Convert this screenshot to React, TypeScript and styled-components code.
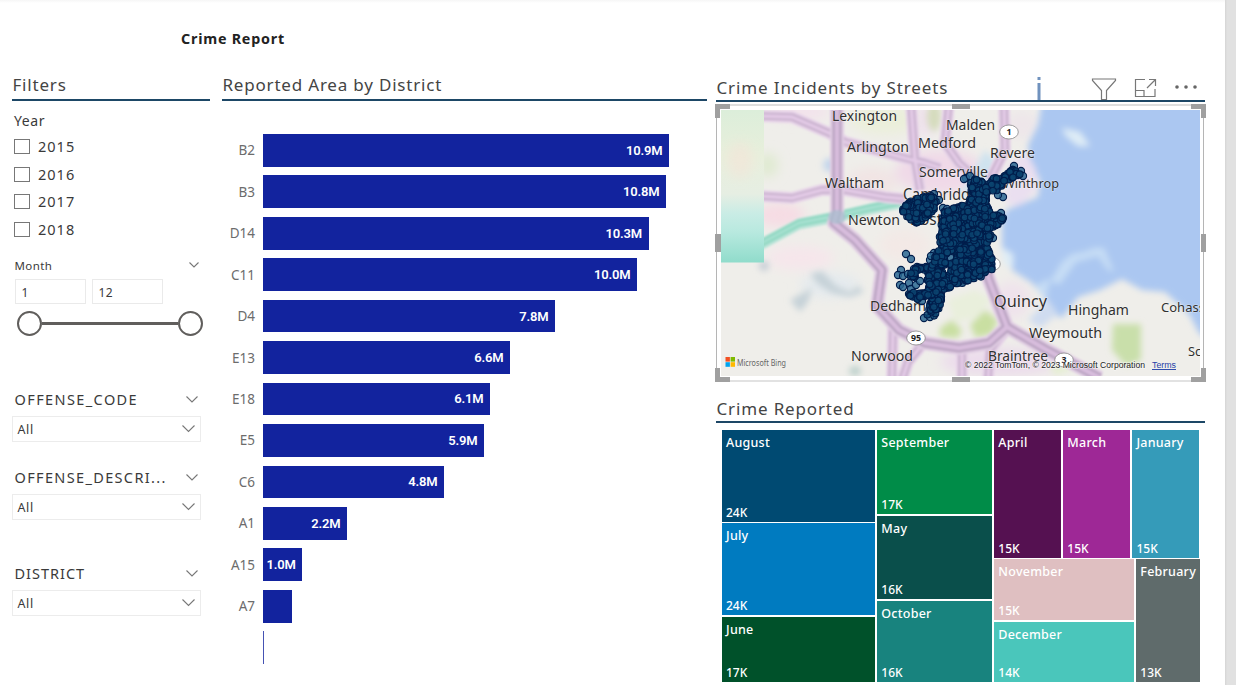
import React from 'react';
import styled, { createGlobalStyle } from 'styled-components';

const Global = createGlobalStyle`
  * { box-sizing: border-box; }
  body { margin: 0; background: #fff; overflow: hidden; font-family: "Noto Sans", "Open Sans", sans-serif; color: #3a3a3a; }
`;

const Page = styled.div`
  width: 1236px;
  height: 685px;
  display: flex;
  background: linear-gradient(#f6f6f6, #fff 3px);
`;
const Report = styled.main`
  width: 1225px;
  height: 685px;
  padding: 27px 0 0 12px;
  overflow: hidden;
`;
const Gutter = styled.div`
  width: 11px;
  background: linear-gradient(90deg, #d4d4d4, #e1e1e1 2px);
`;
const Title = styled.h1`
  margin: 0 0 0 169px;
  height: 24px;
  font-size: 14.3px;
  line-height: 24px;
  font-weight: 700;
  letter-spacing: 0.78px;
  color: #222;
`;
const Columns = styled.div`
  display: grid;
  grid-template-columns: 198px 485px 489px;
  column-gap: 12px;
  padding-top: 21px;
  & > :last-child { margin-left: -3px; width: 489px; }
`;
const Column = styled.section`
  min-width: 0;
`;
const Heading = styled.h2<{ $drop?: number; $spacing?: number }>`
  margin: 0;
  height: ${p => (p.$drop ? 30 : 29)}px;
  padding: ${p => p.$drop ?? 0}px 0 0 0.5px;
  border-bottom: 2px solid #1d4766;
  font-size: 17px;
  line-height: 26px;
  font-weight: 400;
  letter-spacing: ${p => p.$spacing ?? 0.8}px;
  color: #444;
  white-space: nowrap;
`;
const YearLabel = styled.div`
  margin: 9px 0 0 2px;
  height: 22px;
  font-size: 14px;
  line-height: 22px;
  letter-spacing: 0.6px;
`;
const CheckRow = styled.label`
  display: flex;
  align-items: center;
  gap: 8px;
  height: 27.8px;
  padding-left: 2px;
  font-size: 14.5px;
  letter-spacing: 1px;
`;
const Box = styled.span`
  width: 16px;
  height: 15px;
  margin-top: 1px;
  border: 1px solid #777;
`;
const SlicerHead = styled.div<{ $top: number; $small?: boolean; $spacing?: number }>`
  display: flex;
  align-items: center;
  justify-content: space-between;
  height: 24px;
  margin-top: ${p => p.$top}px;
  padding: 0 ${p => (p.$small ? 11.5 : 12.5)}px 0 2.5px;
  font-size: ${p => (p.$small ? 11.5 : 14.5)}px;
  letter-spacing: ${p => p.$spacing ?? 0.4}px;
  white-space: nowrap;
`;
const Inputs = styled.div`
  display: flex;
  gap: 6px;
  margin: 1.5px 0 0 2.5px;
`;
const NumberBox = styled.div`
  width: 71px;
  height: 25px;
  padding-left: 6px;
  border: 1px solid #eaeaea;
  font-size: 12px;
  line-height: 25px;
  letter-spacing: 0.5px;
`;
const Slider = styled.div`
  display: flex;
  align-items: center;
  width: 186px;
  height: 26px;
  margin: 6.5px 0 0 4.5px;
`;
const Knob = styled.span`
  width: 25px;
  height: 25px;
  border: 2px solid #605e5c;
  border-radius: 50%;
`;
const Track = styled.span`
  flex: 1;
  height: 3px;
  background: #605e5c;
`;
const Select = styled.div`
  display: flex;
  align-items: center;
  justify-content: space-between;
  width: 189px;
  height: 26px;
  margin: 5px 0 0 -0.5px;
  padding: 0 4.5px 0 5px;
  border: 1px solid #ececec;
  font-size: 12.5px;
  letter-spacing: 0.6px;
`;
const Chart = styled.div`
  display: flex;
  flex-direction: column;
  gap: 8.75px;
  padding-top: 33px;
`;
const BarRow = styled.div`
  display: flex;
  align-items: center;
  height: 32.7px;
`;
const District = styled.span`
  width: 33px;
  margin-right: 8px;
  text-align: right;
  font-size: 13.5px;
  color: #6c6c6c;
`;
const Bar = styled.div<{ $w: number }>`
  display: flex;
  align-items: center;
  justify-content: flex-end;
  width: ${p => p.$w}px;
  height: 100%;
  padding-right: 6.5px;
  background: #12239e;
  color: #fff;
  font: 600 13px Roboto, sans-serif;
  letter-spacing: -0.15px;
  white-space: nowrap;
`;
const Sliver = styled.div`
  width: 1px;
  height: 100%;
  background: #4552b3;
`;
const HeadRow = styled.div`
  position: relative;
`;
const Tools = styled.svg`
  position: absolute;
  left: 316px;
  top: 0;
`;
const Frame = styled.div`
  position: relative;
  width: 491px;
  height: 280px;
  margin: 1px 0 0 -1px;
  padding: 7px 6px 6px 6px;
`;
const FrameLines = styled.div`
  position: absolute;
  inset: 1px 2px 1px 1px;
  border: 1px solid #b5b5b5;
  border-top: 2px solid #dedede;
  border-bottom: 2px solid #e2e2e2;
`;
const Handles = styled.svg`
  position: absolute;
  left: 0;
  top: 0;
`;
const MapSvg = styled.svg`
  position: relative;
  display: block;
  width: 479px;
  height: 266px;
`;
const TreeHeading = styled(Heading)`
  margin-top: 13px;
  height: 27px;
`;
const Tree = styled.div`
  display: flex;
  gap: 2px;
  width: 477.5px;
  height: 252px;
  margin: 7px 0 0 6px;
`;
const Stack = styled.div<{ $w?: number; $row?: boolean; $h?: number }>`
  display: flex;
  flex-direction: ${p => (p.$row ? 'row' : 'column')};
  gap: ${p => (p.$row ? 2 : 1.7)}px;
  ${p => (p.$w ? `width: ${p.$w}px;` : 'flex: 1;')}
  ${p => (p.$h ? `flex: none; width: 100%; height: ${p.$h}px;` : '')}
`;
const Tile = styled.div<{ $c: string; $size: number }>`
  display: flex;
  flex-direction: column;
  justify-content: space-between;
  flex: ${p => p.$size} 1 0;
  min-width: 0;
  padding: 3px 0 0 4px;
  background: ${p => p.$c};
  color: #fff;
  font-size: 12.5px;
  line-height: 19px;
  font-weight: 500;
  letter-spacing: 0.25px;
`;
const TileValue = styled.span`
  font-size: 12px;
  line-height: 18px;
  letter-spacing: 0;
`;

const Chevron = ({ w = 12, color = '#777' }: { w?: number; color?: string }) => (
  <svg width={w} height={w / 2 + 1} viewBox={`0 0 ${w} ${w / 2 + 1}`} fill="none" stroke={color} strokeWidth="1.1">
    <path d={`M.5 .5 L${w / 2} ${w / 2} L${w - 0.5} .5`} />
  </svg>
);

const years = ['2015', '2016', '2017', '2018'];
const slicers: [string, number, number][] = [['OFFENSE_CODE', 51, 1.4], ['OFFENSE_DESCRI...', 23, 1.35], ['DISTRICT', 41, 1]];
const bars: [string, string, number][] = [
  ['B2', '10.9M', 406], ['B3', '10.8M', 403], ['D14', '10.3M', 385.5], ['C11', '10.0M', 374],
  ['D4', '7.8M', 292], ['E13', '6.6M', 247], ['E18', '6.1M', 227], ['E5', '5.9M', 221],
  ['C6', '4.8M', 181], ['A1', '2.2M', 84], ['A15', '1.0M', 39.3], ['A7', '', 28.7],
];

type Pt = [number, number];
const west: Pt[] = [[902, 207], [906, 203], [915, 199], [931, 195], [936, 198], [938, 206], [933, 210], [928, 216], [921, 222], [916, 223], [908, 219], [903, 212]];
const city: Pt[] = [
  [942, 213], [952, 207], [969, 204], [971, 191], [970, 182], [975, 179], [988, 184], [993, 178], [1003, 177], [1013, 169], [1021, 170], [1021, 175],
  [1008, 180], [998, 190], [986, 195], [990, 213], [1002, 216], [1003, 223], [989, 229], [992, 237], [986, 244], [993, 261], [993, 269],
  [980, 278], [960, 284], [943, 290], [941, 308], [934, 316], [927, 315], [929, 304], [908, 295], [920, 286], [926, 279], [914, 278], [906, 276],
  [917, 267], [931, 267], [937, 252], [940, 234],
];
const clearings: [number, number, number][] = [[951, 257, 5.5], [946, 269, 4], [921, 286, 6.5], [938, 264, 2], [922, 276, 6], [927, 300, 4]];
const strays: Pt[] = [[906, 254], [911, 259], [930, 260], [934, 253], [931, 256], [901, 270], [898, 275], [903, 276], [908, 274], [900, 285], [903, 287], [909, 283],
  [914, 269], [917, 267], [922, 268], [926, 267], [951, 258], [924, 318], [930, 317], [966, 178], [964, 179], [970, 176], [1014, 166], [1021, 171], [1023, 176],
  [1003, 197], [998, 195], [1001, 213], [1003, 218], [939, 200], [934, 194], [943, 208], [947, 209], [993, 238], [909, 294], [914, 296], [918, 299], [922, 301], [913, 276], [911, 289], [916, 285], [920, 281]];
const inside = ([x, y]: Pt, poly: Pt[]) => {
  let hit = false;
  for (let i = 0, j = poly.length - 1; i < poly.length; j = i++) {
    const [xi, yi] = poly[i], [xj, yj] = poly[j];
    if (yi > y !== yj > y && x < ((xj - xi) * (y - yi)) / (yj - yi) + xi) hit = !hit;
  }
  return hit;
};
let seed = 11;
const rnd = () => ((seed = (seed * 16807) % 2147483647) / 2147483647);
const dots: Pt[] = [];
for (let i = 0; i < 4400; i++) {
  const p: Pt = [896 + rnd() * 132, 162 + rnd() * 160];
  const clear = clearings.some(([x, y, r]) => Math.hypot(p[0] - x, p[1] - y) < r);
  if (!clear && (inside(p, city) || inside(p, west))) dots.push(p);
}

const places: [string, number, number, number, number][] = [
  ['Lexington', 832, 121, 65, 14], ['Malden', 946, 130, 49, 14.5], ['Arlington', 847, 152, 62, 14], ['Medford', 918, 148, 58, 14],
  ['Revere', 990, 158, 45, 14], ['Waltham', 825, 188, 59, 14], ['Somerville', 919, 177, 69, 14], ['Winthrop', 1003, 188, 56, 13],
  ['Cambridge', 903, 200, 75, 16], ['Newton', 848, 225, 52, 14], ['Boston', 910, 225, 51, 16], ['Dedham', 870, 311, 56, 14.5],
  ['Quincy', 994, 307, 53, 16], ['Hingham', 1068, 315, 61, 14.5], ['Cohasset', 1161, 312, 56, 13], ['Weymouth', 1029, 338, 73, 14.5],
  ['Norwood', 851, 361, 62, 14], ['Braintree', 988, 361, 60, 14], ['Scituate', 1188, 356, 48, 13],
];

const majorRoads = [
  'M837 104 L837 212 L834 223 L855 240 L882 270 L877 306 L899 330 L925 343 L959 348 L989 343 L1007 327 L1045 349 L1100 378',
  'M984 262 L989 280 L1007 327',
];
const roads = [
  'M760 116 L792 117 L829 133 L845 142 L912 160 L925 163 L940 168',
  'M760 196 L792 198 L822 190 L845 190 L885 197 L905 199',
  'M911 104 L915 160 L920 190',
  'M949 104 L945 143 L959 163 L975 177',
  'M1004 104 L1005 150 L990 180',
  'M893 328 L892 380 M922 345 L908 362 L902 380 M962 348 L962 380 M1004 332 L990 350 L988 380',
];

const Shield = ({ x, y, t }: { x: number; y: number; t: string }) => (
  <g>
    <ellipse cx={x} cy={y} rx="9.3" ry="7" fill="#fff" stroke="#888" strokeWidth=".8" />
    <text x={x} y={y + 3.2} textAnchor="middle" fontSize="8.8" fontWeight="700" fill="#222">{t}</text>
  </g>
);

const StreetMap = () => (
  <MapSvg viewBox="721 110 479 266" fontFamily='"Noto Sans", sans-serif'>
    <defs>
      <filter id="soft" x="-20%" y="-20%" width="140%" height="140%"><feGaussianBlur stdDeviation="3.2" /></filter>
      <filter id="wide" x="-40%" y="-40%" width="180%" height="180%"><feGaussianBlur stdDeviation="6" /></filter>
      <filter id="fine" x="-20%" y="-20%" width="140%" height="140%"><feGaussianBlur stdDeviation="1.3" /></filter>
      <linearGradient id="tile" x1="0" y1="0" x2="0" y2="1">
        <stop offset="0" stopColor="#dceeda" /><stop offset=".3" stopColor="#e8efdc" />
        <stop offset=".55" stopColor="#e6eee3" /><stop offset=".68" stopColor="#c9ece5" />
        <stop offset=".8" stopColor="#b8e9df" /><stop offset="1" stopColor="#90dccb" />
      </linearGradient>
    </defs>
    <rect x="721" y="110" width="479" height="266" fill="#efeeea" />
    <g filter="url(#wide)">
      <ellipse cx="885" cy="120" rx="35" ry="14" fill="#ebefda" />
      <ellipse cx="800" cy="112" rx="30" ry="8" fill="#f3e2ec" />
      <ellipse cx="780" cy="215" rx="25" ry="12" fill="#f6dce4" />
      <ellipse cx="940" cy="172" rx="45" ry="22" fill="#f0d9e8" />
      <ellipse cx="872" cy="182" rx="25" ry="14" fill="#f1e4e4" />
      <ellipse cx="800" cy="258" rx="34" ry="12" fill="#f6e6eb" />
      <ellipse cx="905" cy="245" rx="26" ry="16" fill="#f3e9e6" />
      <ellipse cx="830" cy="285" rx="30" ry="12" fill="#e4eaee" />
      <ellipse cx="768" cy="165" rx="10" ry="12" fill="#dfead0" />
      <ellipse cx="1000" cy="362" rx="60" ry="14" fill="#ecdcec" />
      <ellipse cx="1022" cy="125" rx="16" ry="14" fill="#eee6ea" />
      <ellipse cx="925" cy="120" rx="10" ry="16" fill="#efe0ee" />
      <ellipse cx="1012" cy="300" rx="18" ry="18" fill="#efe2ec" />
    </g>
    <g filter="url(#soft)">
      <path d="M1043 95H1215V345L1199 333L1189 314L1165 292L1142 290L1122 279L1100 290L1078 297L1062 318L1050 312L1046 300L1032 283L1012 270L1002 250L1002 225L1006 210L1038 197L1040 180L1030 163L1028 145L1038 125Z" fill="#abc7f1" />
      <path d="M1008 165L1026 152L1036 170L1036 190L1020 205L1006 204Z" fill="#eadff0" />
      <path d="M960 195L985 150L995 160L990 190Z" fill="#cfe3ef" />
      <path d="M1062 128L1080 132L1090 146L1078 146L1066 136Z M1001 247L1013 254L1013 268L1004 264Z" fill="#dfedf6" />
      <path d="M1050 282L1062 262L1072 254L1084 252L1094 248L1104 248L1114 272L1108 270L1098 256L1076 262L1060 284Z M1035 286L1050 278L1046 300Z" fill="#c6ddf5" />
      <path d="M1028 320L1048 300L1058 314L1040 328Z" fill="#cfdcf0" />
      <path d="M1113 324H1141V360L1126 366L1112 350Z" fill="#c9dfaa" />
      <path d="M970 325L985 310L998 320L992 334L976 338Z M940 328L952 320L962 330L958 338L940 337Z" fill="#c9dfa2" />
      <path d="M948 300L975 290L992 300L975 318L955 322Z" fill="#e9efdc" />
      <path d="M810 274L822 271L836 286L850 292L858 286L864 292L850 297L832 293L818 284Z M790 300L812 288L808 302L800 312Z" fill="#c6d2d8" />
      <circle cx="764" cy="266" r="5" fill="#c6cdd6" />
      <ellipse cx="855" cy="371" rx="6" ry="5" fill="#bfd2cd" />
      <circle cx="830" cy="165" r="7" fill="#c4d6ec" />
      <ellipse cx="934" cy="117" rx="7" ry="14" fill="#d5dcbd" />
      <path d="M1056 376L1048 366L1060 362L1075 368Z" fill="#e6efd4" />
    </g>
    <g filter="url(#fine)" fill="none" strokeLinejoin="round">
      <path d="M760 245 L799 224 L835 217 L870 209 L905 202" stroke="#b9e4d8" strokeWidth="11" />
      <path d="M760 244 L799 223 L835 216 L870 208 L905 201" stroke="#92d8c3" strokeWidth="7.5" />
      <path d="M760 244 L799 223 L835 216 L870 208 L905 201" stroke="#a9e2d2" strokeWidth="2.5" />
      {roads.map(d => <path key={d} d={d} stroke="#e6d2e8" strokeWidth="12" />)}
      {roads.map(d => <path key={d} d={d} stroke="#c8b1cd" strokeWidth="7.5" />)}
      {roads.map(d => <path key={d} d={d} stroke="#e3cae6" strokeWidth="3.5" />)}
      {majorRoads.map(d => <path key={d} d={d} stroke="#e0cce3" strokeWidth="14" />)}
      {majorRoads.map(d => <path key={d} d={d} stroke="#b7a0bf" strokeWidth="9" />)}
      {majorRoads.map(d => <path key={d} d={d} stroke="#d8bddd" strokeWidth="4.5" />)}
      <ellipse cx="837" cy="217" rx="9" ry="7" fill="#a9bfcf" opacity=".75" />
    </g>
    <rect x="721" y="110" width="43" height="152.5" fill="url(#tile)" />
    <ellipse cx="740" cy="160" rx="13" ry="18" fill="#f4e4d8" opacity=".6" filter="url(#wide)" />
    <Shield x={1009} y={132} t="1" />
    <Shield x={916} y={338} t="95" />
    <Shield x={991} y={264} t="" />
    <Shield x={1064} y={360} t="3" />
    <g fill="#303030" stroke="#fff" strokeWidth="1.2" strokeOpacity=".45" paintOrder="stroke">
      {places.map(([t, x, y, w, s]) => <text key={t} x={x} y={y} textLength={w} lengthAdjust="spacingAndGlyphs" fontSize={s}>{t}</text>)}
    </g>
    <polygon points={west.map(p => p.join()).join(' ')} fill="#04245a" />
    <g stroke="#001d4b" strokeWidth="1.1">
      {strays.map(([x, y], i) => <circle key={i} cx={x} cy={y} r="3.6" fill="#2a6792" fillOpacity=".85" />)}
      {dots.map(([x, y], i) => <circle key={i} cx={x} cy={y} r="3.3" fill="#0b4470" fillOpacity=".85" />)}
    </g>
    <g>
      <rect x="725.5" y="357" width="4.4" height="4.6" fill="#f25022" /><rect x="730.6" y="357" width="4.4" height="4.6" fill="#7fba00" />
      <rect x="725.5" y="362.2" width="4.4" height="4.6" fill="#00a4ef" /><rect x="730.6" y="362.2" width="4.4" height="4.6" fill="#ffb900" />
      <text x="737" y="365.5" fontSize="8" textLength="49" lengthAdjust="spacingAndGlyphs" fill="#666">Microsoft Bing</text>
    </g>
    <g fontFamily='"Liberation Sans", sans-serif' fontSize="9.2">
      <text x="965" y="368" textLength="180" fill="#222" stroke="#fff" strokeWidth="1.5" strokeOpacity=".5" paintOrder="stroke" lengthAdjust="spacingAndGlyphs">© 2022 TomTom, © 2023 Microsoft Corporation</text>
      <text x="1152" y="368" textLength="24" fill="#1f3fa8" textDecoration="underline" lengthAdjust="spacingAndGlyphs">Terms</text>
    </g>
  </MapSvg>
);

const Cell = ({ name, value, color, size }: { name: string; value: string; color: string; size: number }) => (
  <Tile $c={color} $size={size}><span>{name}</span><TileValue>{value}</TileValue></Tile>
);

export default function App() {
  return (
    <Page>
      <Global />
      <Report>
        <Title>Crime Report</Title>
        <Columns>
          <Column>
            <Heading>Filters</Heading>
            <YearLabel>Year</YearLabel>
            {years.map(y => <CheckRow key={y}><Box />{y}</CheckRow>)}
            <SlicerHead $top={10} $small>Month<Chevron w={10} /></SlicerHead>
            <Inputs><NumberBox>1</NumberBox><NumberBox>12</NumberBox></Inputs>
            <Slider><Knob /><Track /><Knob /></Slider>
            {slicers.map(([name, top, spacing]) => (
              <React.Fragment key={name}>
                <SlicerHead $top={top} $spacing={spacing}>{name}<Chevron /></SlicerHead>
                <Select>All<Chevron w={13} /></Select>
              </React.Fragment>
            ))}
          </Column>
          <Column>
            <Heading>Reported Area by District</Heading>
            <Chart>
              {bars.map(([d, v, w]) => <BarRow key={d}><District>{d}</District><Bar $w={w}>{v}</Bar></BarRow>)}
              <BarRow><District /><Sliver /></BarRow>
            </Chart>
          </Column>
          <Column>
            <HeadRow>
              <Heading $drop={3} $spacing={0.88}>Crime Incidents by Streets</Heading>
              <Tools width="172" height="30" viewBox="1032 72 172 30" fill="none" stroke="#777" strokeWidth="1.2">
                <path d="M1039 77V80M1039 83V100" stroke="#7092be" strokeWidth="3" />
                <path d="M1092.5 79H1115.5V80.5L1106.5 90.5V99.5H1101.5V90.5L1092.5 80.5Z" />
                <path d="M1145 79.5H1135.5V96.5H1155V89M1135.5 90.5H1144V96.5M1147 88L1155 80M1149 79.5H1155.5V86" />
                <g fill="#666" stroke="none"><circle cx="1177" cy="87" r="1.8" /><circle cx="1186" cy="87" r="1.8" /><circle cx="1195" cy="87" r="1.8" /></g>
              </Tools>
            </HeadRow>
            <Frame>
              <FrameLines />
              <StreetMap />
              <Handles width="491" height="280" viewBox="0 0 491 280" fill="#a0a0a0">
                <path d="M0 1H15V6H5V15H0ZM491 1H476V6H486V15H491ZM0 279H15V274H5V265H0ZM491 279H476V274H486V265H491ZM237 1H255V6H237ZM237 274H255V279H237ZM0 131H6V149H0ZM486 131H491V149H486Z" />
              </Handles>
            </Frame>
            <TreeHeading $spacing={0.85}>Crime Reported</TreeHeading>
            <Tree>
              <Stack $w={153.3}>
                <Cell name="August" value="24K" color="#004a72" size={92} />
                <Cell name="July" value="24K" color="#007bc0" size={92} />
                <Cell name="June" value="17K" color="#00512a" size={64.6} />
              </Stack>
              <Stack $w={115}>
                <Cell name="September" value="17K" color="#008c48" size={84.5} />
                <Cell name="May" value="16K" color="#0a4f4b" size={83} />
                <Cell name="October" value="16K" color="#18837e" size={81} />
              </Stack>
              <Stack>
                <Stack $row $h={127.5}>
                  <Cell name="April" value="15K" color="#551151" size={1} />
                  <Cell name="March" value="15K" color="#9e2896" size={1} />
                  <Cell name="January" value="15K" color="#359bb9" size={1} />
                </Stack>
                <Stack $row>
                  <Stack $w={140}>
                    <Cell name="November" value="15K" color="#dfbfc1" size={61} />
                    <Cell name="December" value="14K" color="#4ac6bb" size={60} />
                  </Stack>
                  <Cell name="February" value="13K" color="#5f6b6b" size={1} />
                </Stack>
              </Stack>
            </Tree>
          </Column>
        </Columns>
      </Report>
      <Gutter />
    </Page>
  );
}
